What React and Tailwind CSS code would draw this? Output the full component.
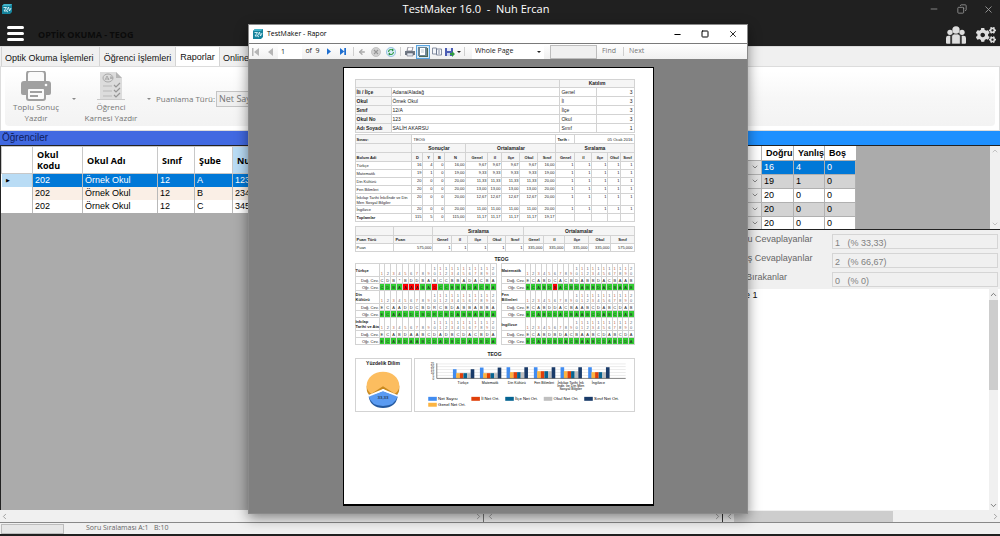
import React from 'react';
import { FaCogs } from 'react-icons/fa';
import {
  ArrowLeft,
  ChevronDown,
  ChevronLeft,
  ChevronRight,
  ChevronUp,
  Copy,
  Minus,
  Square,
  X,
} from 'lucide-react';

const students = [
  { kod: '202', okul: 'Örnek Okul', sinif: '12', sube: 'A', no: '123' },
  { kod: '202', okul: 'Örnek Okul', sinif: '12', sube: 'B', no: '234' },
  { kod: '202', okul: 'Örnek Okul', sinif: '12', sube: 'C', no: '345' },
];

const lessons = [
  ['16', '4', '0'],
  ['19', '1', '0'],
  ['20', '0', '0'],
  ['20', '0', '0'],
  ['20', '0', '0'],
];

const answerStats = [
  { id: 'dogru', label: 'Doğru Cevaplayanlar', value: '1   (% 33,33)' },
  { id: 'yanlis', label: 'Yanlış Cevaplayanlar', value: '2   (% 66,67)' },
  { id: 'bos', label: 'Boş Bırakanlar', value: '0   (% 0)' },
];

const identity = [
  ['İli / İlçe', 'Adana/Aladağ', 'Genel', '3'],
  ['Okul', 'Örnek Okul', 'İl', '3'],
  ['Sınıf', '12/A', 'İlçe', '3'],
  ['Okul No', '123', 'Okul', '3'],
  ['Adı Soyadı', 'SALİH AKARSU', 'Sınıf', '1'],
];

const resultHeads = [
  'D', 'Y', 'B', 'N', 'Genel', 'İl', 'İlçe', 'Okul', 'Sınıf', 'Genel', 'İl', 'İlçe', 'Okul', 'Sınıf',
];

const resultRows = [
  ['Türkçe', '16', '4', '0', '16,00', '9,67', '9,67', '9,67', '9,67', '16,00', '1', '1', '1', '1', '1'],
  ['Matematik', '19', '1', '0', '19,00', '9,33', '9,33', '9,33', '9,33', '19,00', '1', '1', '1', '1', '1'],
  ['Din Kültürü', '20', '0', '0', '20,00', '11,33', '11,33', '11,33', '11,33', '20,00', '1', '1', '1', '1', '1'],
  ['Fen Bilimleri', '20', '0', '0', '20,00', '13,00', '13,00', '13,00', '13,00', '20,00', '1', '1', '1', '1', '1'],
  ['İnkılap Tarihi İnkılİndir ve Din Men Sosyal Bilgiler', '20', '0', '0', '20,00', '12,67', '12,67', '12,67', '12,67', '20,00', '1', '1', '1', '1', '1'],
  ['İngilizce', '20', '0', '0', '20,00', '11,00', '11,00', '11,00', '11,00', '20,00', '1', '1', '1', '1', '1'],
  ['Toplamlar', '115', '5', '0', '115,00', '11,17', '11,17', '11,17', '11,17', '19,17', '', '', '', '', ''],
];

const scoreHeads = ['Genel', 'İl', 'İlçe', 'Okul', 'Sınıf', 'Genel', 'İl', 'İlçe', 'Okul', 'Sınıf'];
const scoreRow = ['1', '1', '1', '1', '1', '335,000', '335,000', '335,000', '335,000', '575,000'];

const leftAnswers = [
  { name: 'Türkçe', sub: '', key: 'CDB*BDDBABCCBBADACBA', given: 'CDBAAAABADCCBBADACBA', wrong: [4, 5, 6, 9] },
  { name: 'Din', sub: 'Kültürü', key: 'ECAADDCBDRCBDABBABBA', given: 'ECAADDCBDRCBDABBABBA', wrong: [] },
  { name: 'İnkılap', sub: 'Tarihi ve Ata', key: 'ECABDAABCDADBCDACBDA', given: 'ECABDAABCDADBCDACBDA', wrong: [] },
];

const rightAnswers = [
  { name: 'Matematik', sub: '', key: 'ECABDCACBDABBDACBAAB', given: 'ECABDBACBDABBDACBAAB', wrong: [5] },
  { name: 'Fen', sub: 'Bilimleri', key: 'ECABDDACBAABCDABCDAB', given: 'ECABDDACBAABCDABCDAB', wrong: [] },
  { name: 'İngilizce', sub: '', key: 'ECABDBDACBAABCDABCDA', given: 'ECABDBDACBAABCDABCDA', wrong: [] },
];

const chartGroups = [
  { x: 321, name: ['Türkçe'], bars: [72, 84, 84, 84, 84, 72] },
  { x: 403, name: ['Matematik'], bars: [67, 84, 84, 84, 84, 67] },
  { x: 484, name: ['Din Kültürü'], bars: [66, 81, 81, 81, 81, 66] },
  { x: 567, name: ['Fen Bilimleri'], bars: [66, 78, 78, 78, 78, 66] },
  { x: 648, name: ['İnkılap Tarihi İnk', 'İndir. ve Din Men', 'Sosyal Bilgiler'], bars: [66, 78, 78, 78, 78, 66] },
  { x: 732, name: ['İngilizce'], bars: [66, 81, 81, 81, 81, 66] },
];

const barColors = ['#418cf0', '#fcb441', '#e0400a', '#056492', '#bfbfbf', '#1a3b69'];

const chartLegend = [
  { label: 'Net Sayısı', color: '#418cf0', x: 246, y: 156 },
  { label: 'İl Net Ort.', color: '#e0400a', x: 377, y: 156 },
  { label: 'İlçe Net Ort.', color: '#056492', x: 480, y: 156 },
  { label: 'Okul Net Ort.', color: '#bfbfbf', x: 597, y: 156 },
  { label: 'Sınıf Net Ort.', color: '#1a3b69', x: 720, y: 156 },
  { label: 'Genel Net Ort.', color: '#fcb441', x: 246, y: 174 },
];

function Logo() {
  return (
    <svg viewBox="0 0 20 20" className="size-[10px] shrink-0">
      <path d="M4 0h16v16l-4 4H0V4z" fill="#16839c" />
      <path d="M4 0h16l-4 4H0z" fill="#42b4ca" />
      <path d="M3 7h6l-5 7h5l4-8 2 8 3-6M9 14l3 2" fill="none" stroke="#e9fbff" strokeWidth="1.7" />
    </svg>
  );
}

function PrinterIcon() {
  return (
    <svg viewBox="0 0 30 30" className="h-[30px] w-[30px]">
      <path d="M6 10V3q0-3 3-3h12q3 0 3 3v7" fill="#fafafa" stroke="#a0a0a0" strokeWidth="2" />
      <path d="M3 10h24q3 0 3 3v9q0 2-2 2H2q-2 0-2-2v-9q0-3 3-3z" fill="#a0a0a0" />
      <rect x="6" y="17" width="18" height="12" rx="2" fill="#fafafa" stroke="#a0a0a0" strokeWidth="2" />
      <path d="M9 21h12M9 25h8" stroke="#a0a0a0" strokeWidth="2" />
      <circle cx="25" cy="14" r="1.3" fill="#fafafa" />
    </svg>
  );
}

function ReportCardIcon() {
  return (
    <svg viewBox="0 0 28 30" className="h-[30px] w-7">
      <path d="M3 1h16l6 6v21H3z" fill="#dcdcdc" />
      <path d="M19 1v6h6z" fill="#b5b5b5" />
      <path d="M0 28h28v1H0z" fill="#c9c9c9" />
      <ellipse cx="11" cy="7" rx="5" ry="4" fill="none" stroke="#a8a8a8" />
      <path d="M8 9l2-4 2 4M9 8h3M13 7h3M14 5v3" fill="none" stroke="#9a9a9a" strokeWidth=".8" />
      <path d="M6 15h9M6 20h9M6 25h9" stroke="#b8b8b8" />
      <path d="M17 14l2 2 4-4M17 19l2 2 4-4M17 24l2 2 4-4" fill="none" stroke="#969696" strokeWidth="1.2" />
    </svg>
  );
}

function UsersIcon() {
  return (
    <svg viewBox="0 0 60 54" className="h-[18px] w-5" fill="#dedede">
      <path d="M0 52V36q0-7 7-7h6v24H3zM60 52V36q0-7-7-7h-6v24h10z" />
      <circle cx="12" cy="19" r="8" />
      <circle cx="48" cy="19" r="8" />
      <path d="M17 54V32q0-8 8-8h10q8 0 8 8v22z" stroke="#202020" strokeWidth="2" />
      <circle cx="30" cy="12" r="11" />
    </svg>
  );
}

function TitleBar() {
  return (
    <div className="flex h-[18px] items-center pl-[2px] text-[11px]">
      <Logo />
      <h1 className="flex-1 pl-5 text-center whitespace-pre text-white">TestMaker 16.0  -  Nuh Ercan</h1>
      <div className="flex text-[#999]">
        <button type="button" aria-label="Küçült" className="flex w-7 justify-center"><Minus size={10} strokeWidth={2} /></button>
        <button type="button" aria-label="Geri yükle" className="flex w-7 justify-center"><Copy size={10} strokeWidth={2} className="rotate-90" /></button>
        <button type="button" aria-label="Kapat" className="flex w-6 justify-center"><X size={11} strokeWidth={2} /></button>
      </div>
    </div>
  );
}

function Header() {
  return (
    <header className="bg-[#202020]">
      <TitleBar />
      <div className="flex h-7 items-center gap-[14px] pr-1 pl-[7px]">
        <button type="button" aria-label="Menü" className="flex w-[17px] flex-col gap-[3px] pt-[2px]">
          <span className="h-[3px] rounded-sm bg-white" />
          <span className="h-[3px] rounded-sm bg-white" />
          <span className="h-[3px] rounded-sm bg-white" />
        </button>
        <p className="flex-1 pt-[6px] text-[9px] font-bold text-[#0b0b0b]">OPTİK OKUMA - TEOG</p>
        <div className="flex items-center gap-[10px] pt-[5px]">
          <button type="button" aria-label="Kullanıcılar"><UsersIcon /></button>
          <button type="button" aria-label="Ayarlar"><FaCogs size={20} color="#dedede" /></button>
        </div>
      </div>
    </header>
  );
}

function Tabs() {
  const tab = 'border-r border-[#d4d4d4] px-[3px] whitespace-nowrap';
  return (
    <nav className="flex h-5 border-t border-[#dcdcdc] bg-[#f0f0f0] pl-[1px] font-['Liberation_Sans',sans-serif] text-[9px] text-[#111]">
      <button type="button" className={`${tab} w-[99px] border-l pt-1 text-left`}>Optik Okuma İşlemleri</button>
      <button type="button" className={`${tab} w-[76px] pt-1`}>Öğrenci İşlemleri</button>
      <button type="button" className={`${tab} w-11 bg-white pt-[2px]`}>Raporlar</button>
      <button type="button" className={`${tab} w-24 pt-1 text-left`}>Online İşlemleri</button>
    </nav>
  );
}

function Caret() {
  return <span className="shrink-0 border-x-2 border-t-2 border-x-transparent border-t-[#888]" />;
}

function Ribbon() {
  return (
    <div className="border border-[#dcdcdc] bg-white p-1">
      <div className="flex h-[55px] items-center rounded-sm bg-linear-to-b from-white via-[#f7f7f7] to-[#f3f3f3] text-[8px] leading-[11px] text-[#757575]">
        <button type="button" className="mr-[5px] flex w-[62px] flex-col items-center pb-1">
          <PrinterIcon />
          <span className="w-12">Toplu Sonuç Yazdır</span>
        </button>
        <Caret />
        <button type="button" className="ml-[3px] flex w-16 flex-col items-center pb-1">
          <ReportCardIcon />
          <span className="w-[54px]">Öğrenci Karnesi Yazdır</span>
        </button>
        <span className="w-1" />
        <Caret />
        <label htmlFor="puan" className="w-[65px] pl-[5px] whitespace-nowrap">Puanlama Türü:</label>
        <select id="puan" className="h-4 w-24 appearance-none border border-[#c4c4c4] bg-[#efefef] px-[2px] text-[9px]">
          <option>Net Sayısı</option>
        </select>
      </div>
    </div>
  );
}

function HorizontalScroll({ thumb }) {
  return (
    <div className="flex h-[12px] items-center justify-between bg-[#f0f0f0] text-[#888]">
      <ChevronLeft size={9} />
      {thumb ? <span className="h-[11px] w-[159px] bg-[#cdcdcd]" /> : null}
      <span className="flex-1" />
      <ChevronRight size={9} />
    </div>
  );
}

function StudentPanel() {
  const head = 'border border-[#c8c8c8] px-[4px] text-left font-bold';
  const cell = 'border-x border-[#b9b9b9] px-[2px]';
  return (
    <section className="flex w-[484px] flex-col border-r border-[#777]">
      <h2 className="h-[14px] bg-[#4169e1] pl-[2px] font-['Liberation_Sans',sans-serif] text-[10px] leading-[13px] font-medium text-[#10205c]">Öğrenciler</h2>
      <div className="flex-1 border-t border-l border-[#222] bg-[#ababab]">
        <table className="w-[304px] table-fixed bg-white">
          <colgroup>
            <col className="w-[31px]" />
            <col className="w-[50px]" />
            <col className="w-[75px]" />
            <col className="w-[37px]" />
            <col className="w-[38px]" />
            <col />
          </colgroup>
          <thead className="text-[9px] leading-[11px] text-black">
            <tr className="h-[27px]">
              <th className={head} />
              <th className={head}>Okul Kodu</th>
              <th className={head}>Okul Adı</th>
              <th className={head}>Sınıf</th>
              <th className={head}>Şube</th>
              <th className={`${head} bg-[#b9dcf5]`}>Numara</th>
            </tr>
          </thead>
          <tbody className="font-['Liberation_Sans',sans-serif] text-[9px] leading-3">
            {students.map((s, i) => (
              <tr
                key={s.sube}
                className={`h-[13px] ${i === 0 ? 'bg-[#0078d7] text-white' : i === 1 ? 'bg-[#faefe6]' : 'bg-white'}`}
              >
                <td className={i === 0 ? 'bg-[#b9dcf5] pl-1 text-[5px] text-black' : 'bg-white'}>{i === 0 ? '▶' : ''}</td>
                <td className={cell}>{s.kod}</td>
                <td className={cell}>{s.okul}</td>
                <td className={cell}>{s.sinif}</td>
                <td className={cell}>{s.sube}</td>
                <td className={cell}>{s.no}</td>
              </tr>
            ))}
          </tbody>
        </table>
      </div>
      <HorizontalScroll />
    </section>
  );
}

function LessonPanel() {
  const cell = 'border border-[#b0b0b0] px-[2px]';
  return (
    <section className="flex min-w-0 flex-1 flex-col pl-[2px] font-['Liberation_Sans',sans-serif] text-[9px]">
      <div className="h-[14px] bg-[#1e90ff]" />
      <div className="flex h-[85px] overflow-hidden border-y border-[#222] bg-[#ababab]">
        <table className="w-[131px] table-fixed bg-white">
          <colgroup>
            <col className="w-9" />
            <col className="w-8" />
            <col className="w-[31px]" />
            <col />
          </colgroup>
          <thead>
            <tr className="h-[14px] text-left text-[9px] leading-3 text-black">
              <th aria-label="Ders" className="border-r border-[#b0b0b0]" />
              <th className="border-r border-[#b0b0b0] pl-1">Doğru</th>
              <th className="border-r border-[#b0b0b0] pl-1">Yanlış</th>
              <th className="pl-1">Boş</th>
            </tr>
          </thead>
          <tbody className="leading-3">
            {lessons.map((row, i) => (
              <tr key={i} className={i === 0 ? 'bg-[#0078d7] text-white' : i % 2 ? 'bg-[#d3d3d3]' : 'bg-white'}>
                <td className="h-[14px] border border-[#b0b0b0] bg-[#e3e3e3] p-0 text-[#555]">
                  <div className="flex items-center justify-between">
                    <select aria-label={`Ders ${i + 1}`} className="h-3 w-5 appearance-none">
                      <option>A</option>
                    </select>
                    <ChevronDown size={8} className="mr-[2px]" />
                  </div>
                </td>
                {row.map((value, n) => (
                  <td key={n} className={cell}>{value}</td>
                ))}
              </tr>
            ))}
          </tbody>
        </table>
        <div className="ml-auto flex w-[10px] flex-col items-center justify-between bg-[#f0f0f0] py-[1px] text-[#aaa]">
          <ChevronUp size={8} />
          <ChevronDown size={8} />
        </div>
      </div>
      <div className="flex flex-col gap-1 bg-[#f0f0f0] pt-1 pr-[2px] pb-[2px] text-[#666]">
        {answerStats.map((stat) => (
          <div key={stat.id} className="flex h-[15px] items-center">
            <label htmlFor={stat.id} className="w-[107px] shrink-0 pb-1 pl-[3px] whitespace-nowrap">{stat.label}</label>
            <input
              id={stat.id}
              readOnly
              value={stat.value}
              className="h-[15px] min-w-0 flex-1 border border-[#d5d5d5] bg-[#f0f0f0] px-[2px] pt-[2px] text-[9px] text-[#808080]"
            />
          </div>
        ))}
      </div>
      <div className="flex min-h-0 flex-1 bg-white">
        <p className="flex-1 pl-1 leading-3 text-[#111]">Şube 1</p>
        <div className="mr-[2px] flex w-[9px] flex-col items-center bg-[#f0f0f0] text-[#555]">
          <ChevronUp size={9} className="my-[1px]" />
          <span className="h-[90px] w-full bg-[#cdcdcd]" />
          <span className="flex-1" />
          <ChevronDown size={9} />
        </div>
      </div>
      <HorizontalScroll thumb />
    </section>
  );
}

function Separator() {
  return <span className="mx-[2px] h-[9px] w-px bg-[#cfcfcf]" />;
}

function ReportToolbar() {
  const item = 'flex h-[14px] shrink-0 items-center justify-center';
  return (
    <div className="flex h-4 items-center border-t border-[#7a7a7a] bg-linear-to-b from-white to-[#f0f0f0] text-[7px] text-[#222]">
      <button type="button" aria-label="İlk sayfa" className={`${item} w-[13px]`}>
        <svg viewBox="0 0 7 8" className="h-2 w-[7px]" fill="#b5b5b5"><path d="M0 0h1.5v8H0zM7 0v8L2 4z" /></svg>
      </button>
      <button type="button" aria-label="Önceki sayfa" className={`${item} w-4`}>
        <svg viewBox="0 0 5 8" className="h-2 w-[5px]" fill="#b5b5b5"><path d="M5 0v8L0 4z" /></svg>
      </button>
      <input aria-label="Sayfa" defaultValue="1" className="h-[14px] w-6 bg-white px-[3px] text-[7px]" />
      <span className="w-[21px] text-center text-[7px] whitespace-pre">of  9</span>
      <button type="button" aria-label="Sonraki sayfa" className={`${item} w-3`}>
        <svg viewBox="0 0 5 8" className="h-[7px] w-1" fill="#1f6fd0"><path d="M0 0v8l5-4z" /></svg>
      </button>
      <button type="button" aria-label="Son sayfa" className={`${item} w-4`}>
        <svg viewBox="0 0 7 8" className="h-[7px] w-[6px]" fill="#1f6fd0"><path d="M0 0v8l5-4zM5 0h2v8H5z" /></svg>
      </button>
      <Separator />
      <button type="button" aria-label="Geri" className={`${item} w-[11px] text-[#aaa]`}><ArrowLeft size={8} strokeWidth={4} /></button>
      <button type="button" aria-label="Durdur" className={`${item} w-[17px]`}>
        <svg viewBox="0 0 10 10" className="size-[10px]">
          <circle cx="5" cy="5" r="4.5" fill="#d2d2d2" stroke="#b5b5b5" strokeWidth=".7" />
          <path d="M3 3l4 4M7 3L3 7" stroke="#969696" strokeWidth="1.1" />
        </svg>
      </button>
      <button type="button" aria-label="Yenile" className={`${item} w-[14px]`}>
        <svg viewBox="0 0 10 10" className="size-[10px]">
          <circle cx="5" cy="5" r="4.6" fill="#d6e9f5" stroke="#7db4d8" strokeWidth=".7" />
          <path d="M2.5 5a2.5 2.5 0 0 1 4-2M7.500 5a2.500 2.500 0 0 1-4 2" fill="none" stroke="#35a04a" strokeWidth="1.1" />
          <path d="M6 1.500v3l2-1.500zM4 5.500v3L2 7z" fill="#2c8f40" />
        </svg>
      </button>
      <Separator />
      <button type="button" aria-label="Yazdır" className={`${item} w-[13px]`}>
        <svg viewBox="0 0 10 10" className="size-[10px]">
          <path d="M3 0h5L7 4H2z" fill="#fff" stroke="#667" strokeWidth=".7" />
          <path d="M0 4h10v4H0z" fill="#6f7883" />
          <path d="M2 6h6v3H2z" fill="#dfe6ee" stroke="#556" strokeWidth=".5" />
        </svg>
      </button>
      <button type="button" aria-label="Yazdırma düzeni" className={`${item} w-[14px] border border-[#5aa5e0] bg-[#d5e9f8]`}>
        <svg viewBox="0 0 10 10" className="size-[10px]">
          <rect x="1" y="1" width="9" height="9" fill="#4c6a52" />
          <rect x="0" y="0" width="9" height="9" fill="#6d8695" />
          <rect x="2" y="1" width="5" height="7" fill="#fff" />
          <path d="M3 3h3M3 5h3" stroke="#8fa7b5" strokeWidth=".6" />
        </svg>
      </button>
      <button type="button" aria-label="Sayfa yapısı" className={`${item} w-[14px]`}>
        <svg viewBox="0 0 10 10" className="size-[10px]" fill="#f4f6fa" stroke="#69758c" strokeWidth=".8">
          <path d="M.5 1h4v6h-4zM4.500 2h5v6h-5z" />
          <path d="M6 4h2M6 6h2" />
        </svg>
      </button>
      <button type="button" aria-label="Kaydet" className={`${item} w-[18px] gap-[2px]`}>
        <svg viewBox="0 0 10 10" className="size-[10px]">
          <path d="M0 1h8v8H0z" fill="#4b5cb4" />
          <path d="M2 1h4v3H2z" fill="#e6eaf7" />
          <path d="M2 6h3v3H2z" fill="#cbd3ee" />
          <path d="M5 6h2V4l3 3-3 3V8H5z" fill="#2f9b43" />
        </svg>
        <span className="border-x-2 border-t-2 border-x-transparent border-t-[#222]" />
      </button>
      <Separator />
      <div className="ml-[5px] flex h-[14px] w-[72px] items-center bg-white pr-[3px]">
        <select aria-label="Yakınlaştırma" className="min-w-0 flex-1 appearance-none pl-[3px] text-[7px]">
          <option>Whole Page</option>
        </select>
        <span className="border-x-2 border-t-2 border-x-transparent border-t-[#222]" />
      </div>
      <input aria-label="Ara" className="ml-[6px] h-[14px] w-[47px] border border-[#bdbdbd] bg-[#f0f0f0]" />
      <button type="button" className="px-[5px] text-[#777]">Find</button>
      <Separator />
      <button type="button" className="px-[3px] text-[#777]">Next</button>
    </div>
  );
}

function IdentityTable() {
  const cell = 'border border-[#d3d3d3] p-0 px-[1px]';
  return (
    <table className="w-full table-fixed text-[5px] leading-[7px]">
      <colgroup>
        <col className="w-9" />
        <col />
        <col className="w-[37px]" />
        <col className="w-[37px]" />
      </colgroup>
      <tbody>
        <tr className="h-[8px] bg-[#f5f5f5]">
          <td colSpan={2} className={cell} />
          <th colSpan={2} className={cell}>Katılım</th>
        </tr>
        {identity.map(([label, value, scope, count]) => (
          <tr key={label} className="h-[9px]">
            <th className={`${cell} bg-[#f5f5f5] text-left`}>{label}</th>
            <td className={cell}>{value}</td>
            <td className={cell}>{scope}</td>
            <td className={`${cell} text-right`}>{count}</td>
          </tr>
        ))}
      </tbody>
    </table>
  );
}

function ResultTable() {
  const cell = 'border border-[#d3d3d3] p-0 px-[1px]';
  return (
    <table className="mt-[1px] w-full table-fixed text-[4px] leading-[5px]">
      <colgroup>
        <col />
        <col className="w-[11px]" />
        <col className="w-[11px]" />
        <col className="w-[11px]" />
        <col className="w-[21px]" />
        <col className="w-[22px]" />
        <col className="w-[14px]" />
        <col className="w-[18px]" />
        <col className="w-[18px]" />
        <col className="w-[18px]" />
        <col className="w-[19px]" />
        <col className="w-[17px]" />
        <col className="w-4" />
        <col className="w-[13px]" />
        <col className="w-[13px]" />
      </colgroup>
      <tbody>
        <tr className="h-[9px]">
          <th className={`${cell} bg-[#f5f5f5] text-left`}>Sınav:</th>
          <td colSpan={9} className={cell}>TEOG</td>
          <th className={`${cell} text-left`}>Tarih :</th>
          <td colSpan={4} className={`${cell} text-right`}>05 Ocak 2016</td>
        </tr>
        <tr className="h-[9px] bg-[#f5f5f5] text-[5px]">
          <td className={cell} />
          <th colSpan={4} className={cell}>Sonuçlar</th>
          <th colSpan={5} className={cell}>Ortalamalar</th>
          <th colSpan={5} className={cell}>Sıralama</th>
        </tr>
        <tr className="h-[9px] bg-[#f5f5f5]">
          <th className={`${cell} text-left`}>Bolum Adi</th>
          {resultHeads.map((head, i) => (
            <th key={i} className={cell}>{head}</th>
          ))}
        </tr>
        {resultRows.map(([name, ...values], i) => (
          <tr key={name} className={i === 4 ? 'h-3' : 'h-[8px]'}>
            <td className={`${cell} ${i === 6 ? 'font-bold' : ''}`}>{name}</td>
            {values.map((value, n) => (
              <td key={n} className={`${cell} text-right align-top`}>{value}</td>
            ))}
          </tr>
        ))}
      </tbody>
    </table>
  );
}

function ScoreTable() {
  const cell = 'border border-[#d3d3d3] p-0 px-[1px]';
  return (
    <table className="mt-1 w-full table-fixed text-[4px] leading-[5px]">
      <colgroup>
        <col />
        <col className="w-[39px]" />
        <col className="w-[19px]" />
        <col className="w-4" />
        <col className="w-5" />
        <col className="w-[18px]" />
        <col className="w-[18px]" />
        <col className="w-5" />
        <col className="w-[21px]" />
        <col className="w-6" />
        <col className="w-[22px]" />
        <col className="w-[23px]" />
      </colgroup>
      <tbody>
        <tr className="h-[9px] bg-[#f5f5f5] text-[5px]">
          <td className={cell} />
          <td className={cell} />
          <th colSpan={5} className={cell}>Sıralama</th>
          <th colSpan={5} className={cell}>Ortalamalar</th>
        </tr>
        <tr className="h-[8px] bg-[#f5f5f5]">
          <th className={`${cell} text-left`}>Puan Türü</th>
          <th className={`${cell} text-left`}>Puan</th>
          {scoreHeads.map((head, i) => (
            <th key={i} className={cell}>{head}</th>
          ))}
        </tr>
        <tr className="h-[8px]">
          <td className={cell}>Puan</td>
          <td className={`${cell} text-right`}>575,000</td>
          {scoreRow.map((value, i) => (
            <td key={i} className={`${cell} text-right`}>{value}</td>
          ))}
        </tr>
      </tbody>
    </table>
  );
}

function AnswerTable({ blocks }) {
  const columns = Array.from({ length: 20 }, (_, i) => i);
  const cell = 'border border-[#d3d3d3] p-0 text-center';
  return (
    <table className="w-full table-fixed text-[4px] leading-[5px]">
      <colgroup>
        <col className="w-6" />
        {columns.map((i) => <col key={i} />)}
      </colgroup>
      {blocks.map((block) => (
        <tbody key={block.name}>
          <tr className="h-[13px]">
            <th className="border border-[#d3d3d3] p-0 text-left whitespace-nowrap">
              {block.name}
              {block.sub ? <span className="block">{block.sub}</span> : null}
            </th>
            {columns.map((i) => (
              <td key={i} className={`${cell} align-bottom ${i % 2 ? 'text-[#567]' : 'text-[#b64]'}`}>
                {String(i + 1).split('').map((digit, n) => <span key={n} className="block">{digit}</span>)}
              </td>
            ))}
          </tr>
          <tr className="h-[7px]">
            <td className="border border-[#d3d3d3] p-0 text-right">Doğ. Cev.</td>
            {columns.map((i) => <td key={i} className={cell}>{block.key[i]}</td>)}
          </tr>
          <tr className="h-[7px]">
            <td className="border border-[#d3d3d3] p-0 text-right">Öğr. Cev.</td>
            {columns.map((i) => (
              <td key={i} className={`${cell} ${block.wrong.includes(i) ? 'bg-[#ff0000]' : 'bg-[#32cd32]'}`}>
                {block.given[i]}
              </td>
            ))}
          </tr>
        </tbody>
      ))}
    </table>
  );
}

function PieChart() {
  return (
    <svg viewBox="31 66 168 132" className="h-11 w-14">
      <path d="M66 122v8q0 18 14 24l36-22 36 22q12-8 12-24v-8z" fill="#c98a1f" />
      <path d="M115 124L80 146Q66 138 66 122C66 98 88 80 115 80S164 98 164 122Q164 138 150 146z" fill="#fcbd5f" />
      <path d="M72 155q6 33 43 34 38-1 44-34v-6H72z" fill="#24599f" />
      <path d="M115 138l44 16q-8 29-44 29-36 0-43-29z" fill="#5a9bf2" />
      <path d="M66 152l49-20 49 20-5 3-44-17-43 17z" fill="#fff" />
      <text x="115" y="162" textAnchor="middle" fontSize="13" fill="#111">33,33</text>
    </svg>
  );
}

function NetChart() {
  return (
    <svg viewBox="209 41 659 158" className="h-[52px] w-full">
      {[56, 64, 73, 82, 91].map((y) => (
        <path key={y} d={`M272 ${y}H846`} stroke="#e2e2e2" strokeWidth="2" />
      ))}
      {[25, 20, 15, 10, 5, 0].map((value, i) => (
        <text key={value} x="264" y={59 + i * 9} textAnchor="end" fontSize="9">{value}</text>
      ))}
      {chartGroups.map((group) => (
        <g key={group.x}>
          {group.bars.map((top, i) => (
            <rect
              key={i}
              x={group.x + [0, 10, 21, 32, 43, 54][i]}
              y={top}
              width="11"
              height={100 - top}
              fill={barColors[i]}
            />
          ))}
          {group.name.map((line, i) => (
            <text key={line} x={group.x + 31} y={116 + i * 10} textAnchor="middle" fontSize="11">{line}</text>
          ))}
        </g>
      ))}
      <path d="M272 54v46h574" fill="none" stroke="#444" strokeWidth="2" />
      {chartLegend.map((entry) => (
        <g key={entry.label}>
          <rect x={entry.x} y={entry.y} width="26" height="12" fill={entry.color} />
          <text x={entry.x + 30} y={entry.y + 11} fontSize="13">{entry.label}</text>
        </g>
      ))}
    </svg>
  );
}

function ReportPage() {
  return (
    <article className="mx-auto h-full w-[311px] border border-b-2 border-black bg-white pt-[11px] pr-[18px] pl-[11px] font-['Liberation_Sans',sans-serif] text-[#222]">
      <IdentityTable />
      <ResultTable />
      <ScoreTable />
      <h3 className="pt-1 pl-[14px] text-center text-[5px] leading-[7px] font-bold">TEOG</h3>
      <div className="flex gap-1">
        <div className="w-[142px] shrink-0"><AnswerTable blocks={leftAnswers} /></div>
        <div className="min-w-0 flex-1"><AnswerTable blocks={rightAnswers} /></div>
      </div>
      <h3 className="pt-[6px] text-center text-[5px] leading-[7px] font-bold">TEOG</h3>
      <div className="flex gap-[2px]">
        <figure className="flex h-[54px] w-[57px] shrink-0 flex-col items-center border border-[#d3d3d3]">
          <figcaption className="pt-[1px] text-[5px] leading-[7px] font-bold whitespace-nowrap">Yüzdelik Dilim</figcaption>
          <PieChart />
        </figure>
        <figure className="h-[54px] min-w-0 flex-1 border border-[#d3d3d3]">
          <NetChart />
        </figure>
      </div>
    </article>
  );
}

function ReportWindow() {
  return (
    <div
      role="dialog"
      aria-label="TestMaker - Rapor"
      className="absolute top-6 bottom-[22px] left-[24.8%] flex w-1/2 flex-col border border-[#8a8a8a] bg-[#808080] shadow-[0_4px_12px_rgba(0,0,0,0.45)]"
    >
      <div className="flex h-[18px] items-center bg-white pl-1 text-[7px] text-black">
        <Logo />
        <span className="flex-1 pl-1">TestMaker - Rapor</span>
        <button type="button" aria-label="Simge durumu" className="flex w-7 justify-center"><Minus size={9} strokeWidth={3} /></button>
        <button type="button" aria-label="Büyüt" className="flex w-7 justify-center"><Square size={8} strokeWidth={3} /></button>
        <button type="button" aria-label="Pencereyi kapat" className="flex w-7 justify-center"><X size={10} strokeWidth={2} /></button>
      </div>
      <ReportToolbar />
      <div className="min-h-0 flex-1 pt-2 pb-[7px]">
        <ReportPage />
      </div>
    </div>
  );
}

export default function App() {
  return (
    <div className="relative flex h-screen flex-col overflow-hidden bg-[#f0f0f0] font-['Open_Sans',sans-serif]">
      <Header />
      <Tabs />
      <Ribbon />
      <main className="flex min-h-0 flex-1 border-b border-[#888]">
        <StudentPanel />
        <section className="ml-[2px] flex w-[237px] flex-col border-r border-[#333]">
          <div className="h-[14px] bg-[#1e90ff]" />
          <div className="flex-1 bg-[#ababab]" />
          <HorizontalScroll />
        </section>
        <LessonPanel />
      </main>
      <footer className="flex h-[13px] items-center gap-[22px] border-b-2 border-[#202020] pl-[1px] text-[7px] text-[#666]">
        <span className="h-[10px] w-[63px] border border-[#bcbcbc] bg-[#e6e6e6]" />
        <span className="whitespace-pre">Soru Sıralaması A:1   B:10</span>
      </footer>
      <ReportWindow />
    </div>
  );
}
